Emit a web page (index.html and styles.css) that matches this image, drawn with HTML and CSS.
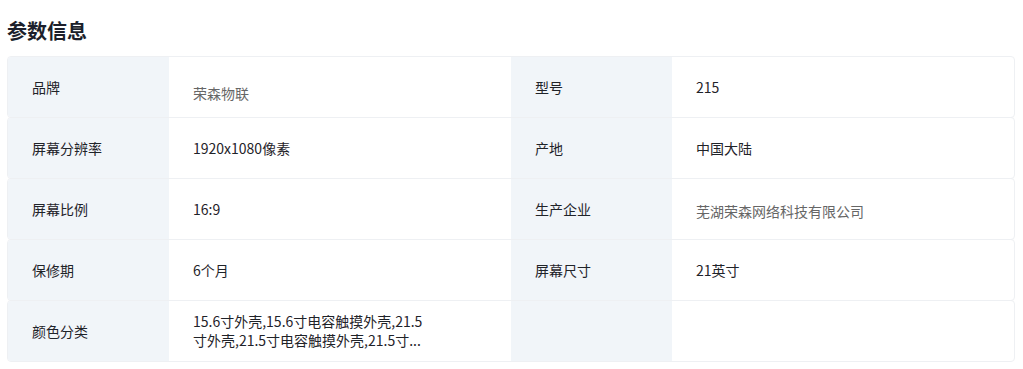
FILE: index.html
```html
<!DOCTYPE html>
<html lang="zh-CN">
<head>
<meta charset="utf-8">
<title>参数信息</title>
<link rel="stylesheet" href="styles.css">
</head>
<body>
<section class="params">
  <h2 class="params-title">参数信息</h2>
  <div class="params-table">
    <div class="row">
      <div class="label">品牌</div>
      <div class="value value-muted value-low">荣森物联</div>
      <div class="label">型号</div>
      <div class="value">215</div>
    </div>
    <div class="row">
      <div class="label">屏幕分辨率</div>
      <div class="value">1920x1080像素</div>
      <div class="label">产地</div>
      <div class="value">中国大陆</div>
    </div>
    <div class="row">
      <div class="label">屏幕比例</div>
      <div class="value">16:9</div>
      <div class="label">生产企业</div>
      <div class="value value-muted value-low2">芜湖荣森网络科技有限公司</div>
    </div>
    <div class="row">
      <div class="label">保修期</div>
      <div class="value">6个月</div>
      <div class="label">屏幕尺寸</div>
      <div class="value">21英寸</div>
    </div>
    <div class="row">
      <div class="label">颜色分类</div>
      <div class="value"><span class="clamp">15.6寸外壳,15.6寸电容触摸外壳,21.5寸外壳,21.5寸电容触摸外壳,21.5寸...</span></div>
      <div class="label"></div>
      <div class="value"></div>
    </div>
  </div>
</section>
</body>
</html>
```

FILE: styles.css
```css
* { box-sizing: border-box; }
html, body {
  margin: 0;
  background: #ffffff;
}
body {
  font-family: "Noto Sans CJK SC", "Noto Sans", sans-serif;
  color: #1f2329;
}
.params {
  padding: 17px 8px 0 7px;
}
.params-title {
  margin: 0 0 11px;
  font-size: 20px;
  line-height: 28px;
  font-weight: 700;
  color: #1c1f2b;
}
.params-table {
  display: flex;
  flex-direction: column;
}
.row {
  display: grid;
  grid-template-columns: 161px 342px 161px 1fr;
  height: 62px;
  border: 1px solid #eef0f3;
  border-radius: 4px;
  overflow: hidden;
  margin-top: -1px;
}
.row:first-child { margin-top: 0; }
.label {
  background: #f1f5f9;
  display: flex;
  align-items: center;
  padding: 0 24px;
  font-size: 14px;
  color: #1f2329;
}
.value {
  display: flex;
  align-items: center;
  padding: 0 24px;
  font-size: 14px;
  color: #1f2329;
}
.value-muted { color: #666666; }
.value-low { padding-top: 12px; }
.value-low2 { padding-top: 4px; }
.clamp {
  display: block;
  max-width: 240px;
  line-height: 19px;
}
```
